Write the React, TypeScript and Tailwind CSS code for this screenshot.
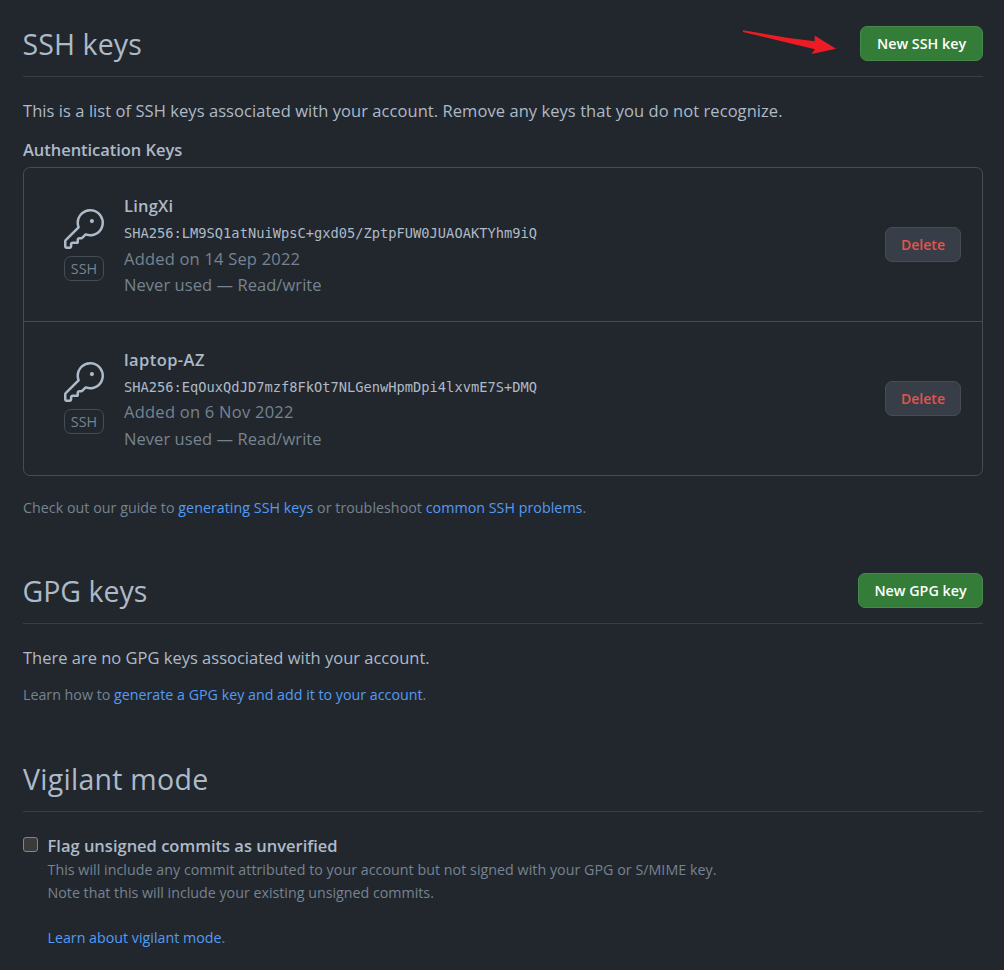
import { GoKey } from "react-icons/go";
import type { ReactNode } from "react";

type SshKey = {
  name: string;
  fingerprint: string;
  added: string;
  iconClass: string;
  nameClass: string;
  fingerprintClass: string;
  addedClass: string;
};

const keys: SshKey[] = [
  {
    name: "LingXi",
    fingerprint: "SHA256:LM9SQ1atNuiWpsC+gxd05/ZptpFUW0JUAOAKTYhm9iQ",
    added: "Added on 14 Sep 2022",
    iconClass: "mt-[41px]",
    nameClass: "tracking-[0.2px]",
    fingerprintClass: "h-[27px]",
    addedClass: "h-[26px] tracking-[0.2px]",
  },
  {
    name: "laptop-AZ",
    fingerprint: "SHA256:EqOuxQdJD7mzf8FkOt7NLGenwHpmDpi4lxvmE7S+DMQ",
    added: "Added on 6 Nov 2022",
    iconClass: "mt-[40px]",
    nameClass: "tracking-[0.42px]",
    fingerprintClass: "h-[26px]",
    addedClass: "h-[27px] tracking-[0.25px]",
  },
];

function SectionHeader({ title, className, children }: { title: string; className: string; children?: ReactNode }) {
  return (
    <header className="flex h-[51px] items-start justify-between border-b border-[#373e47]">
      <h2 className={`${className} text-[28.5px] leading-[36px]`}>{title}</h2>
      {children}
    </header>
  );
}

function NewButton({ className, children }: { className: string; children: ReactNode }) {
  return (
    <button className={`${className} h-[35px] rounded-[7px] border border-[#46894b] bg-[#347d39] text-[14.3px] font-semibold whitespace-nowrap text-white`}>
      {children}
    </button>
  );
}

function Link({ children }: { children: ReactNode }) {
  return <a href="#" className="text-[#539bf5]">{children}</a>;
}

function KeyRow({ item }: { item: SshKey }) {
  return (
    <li className="box-content flex h-[153px] items-start">
      <div className={`${item.iconClass} ml-10 flex w-10 flex-col items-center`}>
        <GoKey className="size-10" />
        <span className="mt-[7px] flex h-[25px] w-10 items-center justify-center rounded-[7px] border border-[#444c56] text-[14.4px] text-[#768390]">
          SSH
        </span>
      </div>
      <div className="mt-[25px] ml-5 grow text-[16.5px] leading-[26px] whitespace-nowrap text-[#768390]">
        <div className={`${item.nameClass} font-semibold text-[#adbac7]`}>{item.name}</div>
        <div className={`${item.fingerprintClass} pt-px font-['DejaVu_Sans_Mono',monospace] text-[13.73px] text-[#adbac7]`}>{item.fingerprint}</div>
        <div className={item.addedClass}>{item.added}</div>
        <div className="tracking-[0.06px]">Never used — Read/write</div>
      </div>
      <button className="mt-[59px] mr-[21px] h-[35px] w-[76px] rounded-[7px] border border-[#444c56] bg-[#373e47] text-[14px] font-semibold text-[#e5534b]">
        Delete
      </button>
    </li>
  );
}

export default function App() {
  return (
    <main className="h-[970px] w-[1004px] overflow-hidden bg-[#22272e] pt-[26px] pr-[21px] pl-[23px] font-['Open_Sans',sans-serif] text-[#adbac7]">
      <section className="relative h-[547px]">
        <SectionHeader title="SSH keys" className="-ml-[0.5px] tracking-[0.1px]">
          <NewButton className="w-[123px]">New SSH key</NewButton>
        </SectionHeader>
        <svg className="absolute top-0 left-[718px]" width="98" height="32" viewBox="0 0 98 32" fill="#ed1c24">
          <path d="M2 4.2 L46 11.8 L73.8 15.3 L73.6 9.6 L95 22.7 L70.5 28 L74 23.2 L52 18 L2 5.9 Z" />
        </svg>
        <p className="mt-[21px] text-[16.5px] leading-[26px] tracking-[0.06px]">
          This is a list of SSH keys associated with your account. Remove any keys that you do not recognize.
        </p>
        <h3 className="mt-[13px] text-[16.5px] leading-[26px] font-semibold tracking-[-0.05px]">Authentication Keys</h3>
        <ul className="mt-[4px] divide-y divide-[#444c56] rounded-[7px] border border-[#444c56]">
          {keys.map((item) => <KeyRow key={item.name} item={item} />)}
        </ul>
        <p className="mt-[20px] text-[14.25px] leading-[23px] tracking-[0.035px] text-[#768390]">
          Check out our guide to <Link>generating SSH keys</Link> or troubleshoot <Link>common SSH problems</Link>.
        </p>
      </section>
      <section className="h-[188px]">
        <SectionHeader title="GPG keys" className="-ml-[0.5px]">
          <NewButton className="w-[125px]">New GPG key</NewButton>
        </SectionHeader>
        <p className="mt-[21px] text-[16.5px] leading-[26px]">There are no GPG keys associated with your account.</p>
        <p className="mt-[12px] text-[14.25px] leading-[23px] text-[#768390]">
          Learn how to <Link>generate a GPG key and add it to your account</Link>.
        </p>
      </section>
      <section>
        <SectionHeader title="Vigilant mode" className="tracking-[0.27px]" />
        <div className="mt-[21px] flex items-start">
          <input type="checkbox" className="mt-[4px] size-[15px] appearance-none rounded-[3px] border border-[#858585] bg-[#3b3b3b]" />
          <div className="ml-[9.5px] text-[14.25px] leading-[23px] text-[#768390]">
            <label className="block h-[25px] text-[16.5px] leading-[26px] font-semibold text-[#adbac7]">Flag unsigned commits as unverified</label>
            <p className="tracking-[0.035px]">This will include any commit attributed to your account but not signed with your GPG or S/MIME key.</p>
            <p>Note that this will include your existing unsigned commits.</p>
            <p className="mt-[22px]"><Link>Learn about vigilant mode</Link>.</p>
          </div>
        </div>
      </section>
    </main>
  );
}
